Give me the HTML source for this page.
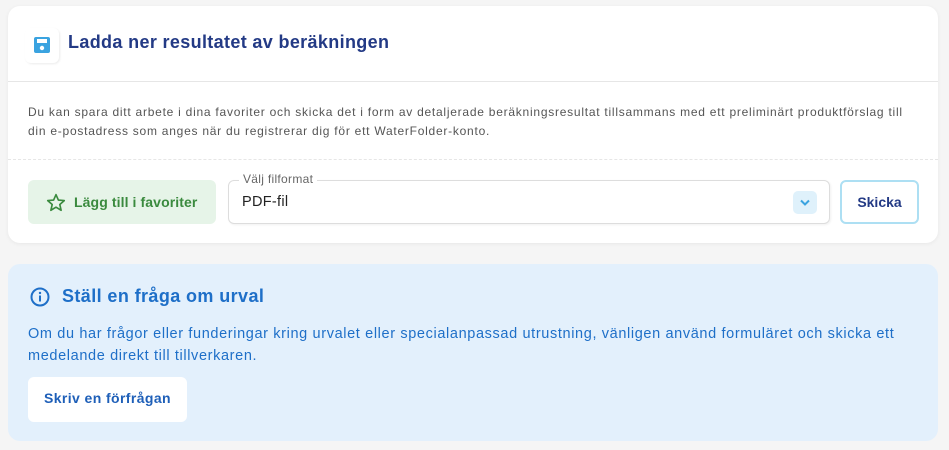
<!DOCTYPE html>
<html><head><meta charset="utf-8"><style>
*{box-sizing:border-box;margin:0;padding:0}
body{width:949px;height:450px;background:#f5f5f5;font-family:"Liberation Sans",sans-serif;position:relative;overflow:hidden}
.c1{position:absolute;left:8px;top:6px;width:930px;height:237px;background:#fff;border-radius:12px;box-shadow:0 1px 4px rgba(0,0,0,.06)}
.ib{position:absolute;left:17px;top:22px;width:34px;height:35px;border-radius:6px;box-shadow:1px 1px 2px rgba(0,0,0,.08)}
.t1{position:absolute;left:60px;top:26px;font-size:18px;font-weight:bold;color:#233a85;letter-spacing:.35px}
.hr{position:absolute;left:0;right:0;top:75px;border-top:1px solid #e6e6e6}
.p{position:absolute;left:20px;top:97px;font-size:12px;line-height:19px;color:#555;width:910px;letter-spacing:.75px;white-space:nowrap}
.dh{position:absolute;left:0;right:0;top:153px;border-top:1px dashed #e6e6e6}
.fav{position:absolute;left:20px;top:174px;width:188px;height:44px;background:#e6f4e8;border-radius:6px;color:#3a8a3e;font-weight:bold;font-size:14px;padding:14px 0 0 46px;letter-spacing:.1px}
.sel{position:absolute;left:220px;top:174px;width:602px;height:44px;border:1px solid #ddd;border-radius:6px;box-shadow:1px 1px 2px rgba(0,0,0,.06)}
.lg{position:absolute;left:10px;top:-9px;background:#fff;padding:0 4px;font-size:12px;color:#666;letter-spacing:.3px}
.val{position:absolute;left:13px;top:13px;font-size:14.5px;color:#222;letter-spacing:.3px}
.chev{position:absolute;left:564px;top:10px;width:24px;height:23px;background:#dff1fb;border-radius:5px}
.sk{position:absolute;left:832px;top:174px;width:79px;height:44px;border:2px solid #addff3;border-radius:6px;color:#233a85;font-weight:bold;font-size:14px;text-align:center;padding-top:12px}
.c2{position:absolute;left:8px;top:264px;width:930px;height:177px;background:#e3f0fc;border-radius:12px}
.t2{position:absolute;left:54px;top:22px;font-size:18px;font-weight:bold;color:#1e6fc8;letter-spacing:.4px}
.p2{position:absolute;left:20px;top:59px;font-size:14.5px;line-height:22px;color:#1e6fc8;width:910px;letter-spacing:.63px;white-space:nowrap}
.b2{position:absolute;left:20px;top:113px;width:159px;height:45px;background:#fff;border-radius:6px;color:#1e5fb8;font-weight:bold;font-size:14px;text-align:center;padding-top:13px;letter-spacing:.4px}
</style></head><body>
<div class="c1">
 <div class="ib"><svg style="position:absolute;left:8px;top:8px" width="18" height="18" viewBox="0 0 18 18"><rect x="1" y="1" width="16" height="16" rx="2" fill="#3aa3e0"/><rect x="4" y="3" width="10" height="4" fill="#fff"/><circle cx="9" cy="12" r="2.2" fill="#fff"/></svg></div>
 <div class="t1">Ladda ner resultatet av beräkningen</div>
 <div class="hr"></div>
 <div class="p">Du kan spara ditt arbete i dina favoriter och skicka det i form av detaljerade beräkningsresultat tillsammans med ett preliminärt produktförslag till<br>din e-postadress som anges när du registrerar dig för ett WaterFolder-konto.</div>
 <div class="dh"></div>
 <div class="fav"><svg style="position:absolute;left:18px;top:13px" width="20" height="19" viewBox="0 0 24 23"><path d="M12 2l2.9 6.6 7.1.6-5.4 4.7 1.6 7-6.2-3.7-6.2 3.7 1.6-7L2 9.2l7.1-.6z" fill="none" stroke="#3a8a3e" stroke-width="2" stroke-linejoin="round"/></svg>Lägg till i favoriter</div>
 <div class="sel"><div class="lg">Välj filformat</div><div class="val">PDF-fil</div><div class="chev"><svg style="position:absolute;left:7px;top:8px" width="10" height="7" viewBox="0 0 10 7"><path d="M1 1.5l4 4 4-4" fill="none" stroke="#3aa3e0" stroke-width="2"/></svg></div></div>
 <div class="sk">Skicka</div>
</div>
<div class="c2">
 <svg style="position:absolute;left:22px;top:23px" width="20" height="20" viewBox="0 0 20 20"><circle cx="10" cy="10" r="8.5" fill="none" stroke="#1e6fc8" stroke-width="2"/><rect x="9" y="8.5" width="2" height="6" fill="#1e6fc8"/><circle cx="10" cy="6" r="1.2" fill="#1e6fc8"/></svg>
 <div class="t2">Ställ en fråga om urval</div>
 <div class="p2">Om du har frågor eller funderingar kring urvalet eller specialanpassad utrustning, vänligen använd formuläret och skicka ett<br>medelande direkt till tillverkaren.</div>
 <div class="b2">Skriv en förfrågan</div>
</div>
</body></html>
